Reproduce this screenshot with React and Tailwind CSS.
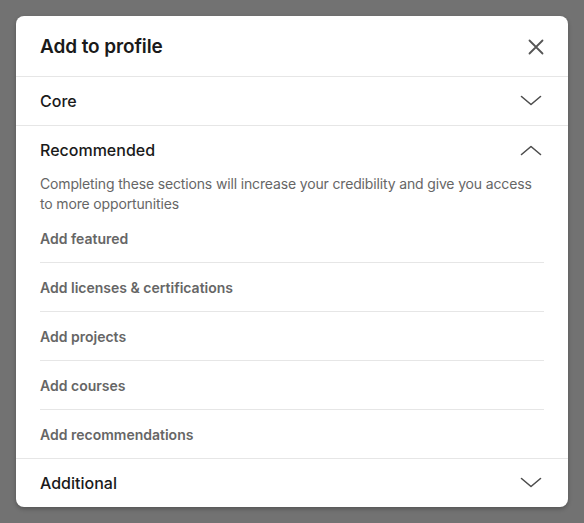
import { useState } from "react";

const Chevron = ({ up }) => (
    <svg width="22" height="12" viewBox="0 0 22 12" className="text-[#4d4d4d]">
        <polyline
            points={up ? "1.5,10.5 11,2.5 20.5,10.5" : "1.5,1.5 11,9.5 20.5,1.5"}
            fill="none"
            stroke="currentColor"
            strokeWidth="1.6"
            strokeLinecap="round"
            strokeLinejoin="round"
        />
    </svg>
);

const CloseIcon = () => (
    <svg width="16" height="16" viewBox="0 0 16 16" className="text-[#555]">
        <path d="M1.5 1.5 L14.5 14.5 M14.5 1.5 L1.5 14.5" stroke="currentColor" strokeWidth="1.8" strokeLinecap="round" />
    </svg>
);

const items = [
    "Add featured",
    "Add licenses & certifications",
    "Add projects",
    "Add courses",
    "Add recommendations",
];

export default function App() {
    const [open, setOpen] = useState("recommended");

    const toggle = (key) => setOpen(open === key ? null : key);

    return (
        <div className="min-h-[523px] bg-[#727272] p-4 font-['Inter','Liberation_Sans',sans-serif]">
            <div className="bg-white rounded-lg shadow-[0_2px_4px_rgba(0,0,0,0.25)] overflow-hidden">
                {/* Header */}
                <div className="h-[61px] px-6 pt-[2px] flex items-center justify-between border-b border-[#e6e6e6]">
                    <h2 className="text-[19px] font-semibold text-[#1a1a1a] tracking-[-0.1px]">Add to profile</h2>
                    <button className="mr-[0px]">
                        <CloseIcon />
                    </button>
                </div>

                {/* Core */}
                <button
                    onClick={() => toggle("core")}
                    className="w-full h-[49px] px-6 flex items-center justify-between border-b border-[#e6e6e6]"
                >
                    <span className="text-[16px] font-medium text-[#1a1a1a]">Core</span>
                    <span className="mr-[2px]"><Chevron up={open === "core"} /></span>
                </button>

                {/* Recommended */}
                <div className="border-b border-[#e6e6e6]">
                    <button
                        onClick={() => toggle("recommended")}
                        className="w-full h-[48px] px-6 flex items-center justify-between"
                    >
                        <span className="text-[16px] font-medium text-[#1a1a1a]">Recommended</span>
                        <span className="mr-[2px]"><Chevron up={open === "recommended"} /></span>
                    </button>
                    {open === "recommended" && (
                        <div className="px-6">
                            <p className="text-[14px] leading-5 text-[#666] pr-2 tracking-[-0.15px]">
                                Completing these sections will increase your credibility and give you access to more opportunities
                            </p>
                            <ul>
                                {items.map((item, idx) => (
                                    <li
                                        key={item}
                                        className={`h-[48px] flex items-center ${idx < items.length - 1 ? "border-b border-[#e6e6e6] h-[49px]" : ""}`}
                                    >
                                        <span className="text-[14px] font-semibold text-[#666]">{item}</span>
                                    </li>
                                ))}
                            </ul>
                        </div>
                    )}
                </div>

                {/* Additional */}
                <button
                    onClick={() => toggle("additional")}
                    className="w-full h-[48px] px-6 flex items-center justify-between"
                >
                    <span className="text-[16px] font-medium text-[#1a1a1a]">Additional</span>
                    <span className="mr-[2px]"><Chevron up={open === "additional"} /></span>
                </button>
            </div>
        </div>
    );
}
